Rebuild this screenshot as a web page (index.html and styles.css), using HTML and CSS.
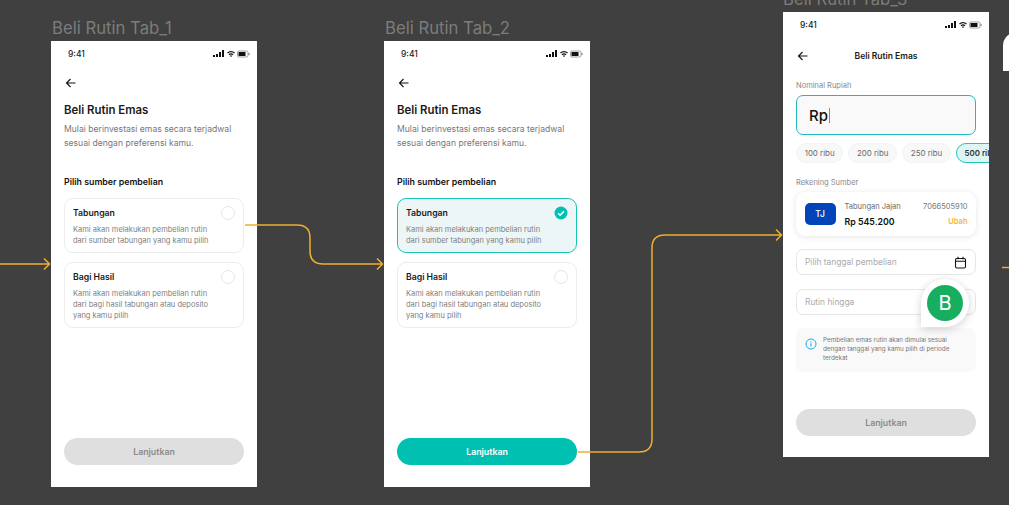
FILE: index.html
```html
<!DOCTYPE html>
<html lang="id">
<head>
<meta charset="utf-8">
<title>Beli Rutin</title>
<link rel="stylesheet" href="styles.css">
</head>
<body>
<main class="canvas">
  <svg class="wires" width="1009" height="505" viewBox="0 0 1009 505" fill="none" stroke="#eeae2f" stroke-width="1.5">
    <path d="M0 264H49M44 258.500L49.500 264L44 269.500"/>
    <path d="M245 225H297Q310 225 310 238V251Q310 264 323 264H382M377 258.500L382.500 264L377 269.500"/>
    <path d="M578 452H639Q652 452 652 439V248Q652 235 665 235H781M776 229.500L781.500 235L776 240.500"/>
    <path d="M1002 267.500H1009"/>
  </svg>

  <h2 class="board-name name-1">Beli Rutin Tab_1</h2>
  <section class="phone phone-1">
    <div class="status"><span>9:41</span>
      <svg class="status-icons" width="37" height="8" viewBox="0 0 37 8"><path d="M0 5h2v2H0zM3 4h2v3H3zM6 2h2v5H6zM9 0h2v7H9z" fill="#111"/><path d="M14.500 3a5 5 0 0 1 7 0M16 4.700a3 3 0 0 1 4 0" stroke="#111" fill="none" stroke-width="1.200"/><path d="M17 6l1-1 1 1-1 1z" fill="#111"/><rect x="24.500" y="1" width="10.500" height="6" rx="1.500" fill="none" stroke="#777" stroke-width=".7"/><rect x="25.500" y="2" width="7" height="4" fill="#111"/><path d="M36 3v2" stroke="#777"/></svg>
    </div>
    <svg class="back" width="12" height="12" viewBox="0 0 12 12" fill="none" stroke="#111" stroke-width="1.100"><path d="M10.500 6H1.500M5.500 2L1.500 6L5.500 10"/></svg>
    <h1 class="title">Beli Rutin Emas</h1>
    <p class="lead">Mulai berinvestasi emas secara terjadwal<br>sesuai dengan preferensi kamu.</p>
    <h3 class="section">Pilih sumber pembelian</h3>
    <div class="option">
      <div class="option-head"><strong>Tabungan</strong><i class="radio"></i></div>
      <p>Kami akan melakukan pembelian rutin<br>dari sumber tabungan yang kamu pilih</p>
    </div>
    <div class="option">
      <div class="option-head"><strong>Bagi Hasil</strong><i class="radio"></i></div>
      <p>Kami akan melakukan pembelian rutin<br>dari bagi hasil tabungan atau deposito<br>yang kamu pilih</p>
    </div>
    <button class="cta">Lanjutkan</button>
  </section>

  <h2 class="board-name name-2">Beli Rutin Tab_2</h2>
  <section class="phone phone-2">
    <div class="status"><span>9:41</span>
      <svg class="status-icons" width="37" height="8" viewBox="0 0 37 8"><path d="M0 5h2v2H0zM3 4h2v3H3zM6 2h2v5H6zM9 0h2v7H9z" fill="#111"/><path d="M14.500 3a5 5 0 0 1 7 0M16 4.700a3 3 0 0 1 4 0" stroke="#111" fill="none" stroke-width="1.200"/><path d="M17 6l1-1 1 1-1 1z" fill="#111"/><rect x="24.500" y="1" width="10.500" height="6" rx="1.500" fill="none" stroke="#777" stroke-width=".7"/><rect x="25.500" y="2" width="7" height="4" fill="#111"/><path d="M36 3v2" stroke="#777"/></svg>
    </div>
    <svg class="back" width="12" height="12" viewBox="0 0 12 12" fill="none" stroke="#111" stroke-width="1.100"><path d="M10.500 6H1.500M5.500 2L1.500 6L5.500 10"/></svg>
    <h1 class="title">Beli Rutin Emas</h1>
    <p class="lead">Mulai berinvestasi emas secara terjadwal<br>sesuai dengan preferensi kamu.</p>
    <h3 class="section">Pilih sumber pembelian</h3>
    <div class="option selected">
      <div class="option-head"><strong>Tabungan</strong>
        <svg class="check" width="14" height="14" viewBox="0 0 14 14"><circle cx="7" cy="7" r="6.500" fill="#00c0b2"/><path d="M4 7.200L6.100 9.200L10 5.200" fill="none" stroke="#fff" stroke-width="1.500"/></svg>
      </div>
      <p>Kami akan melakukan pembelian rutin<br>dari sumber tabungan yang kamu pilih</p>
    </div>
    <div class="option">
      <div class="option-head"><strong>Bagi Hasil</strong><i class="radio"></i></div>
      <p>Kami akan melakukan pembelian rutin<br>dari bagi hasil tabungan atau deposito<br>yang kamu pilih</p>
    </div>
    <button class="cta cta-on">Lanjutkan</button>
  </section>

  <h2 class="board-name name-3">Beli Rutin Tab_3</h2>
  <section class="phone phone-3">
    <div class="status"><span>9:41</span>
      <svg class="status-icons" width="37" height="8" viewBox="0 0 37 8"><path d="M0 5h2v2H0zM3 4h2v3H3zM6 2h2v5H6zM9 0h2v7H9z" fill="#111"/><path d="M14.500 3a5 5 0 0 1 7 0M16 4.700a3 3 0 0 1 4 0" stroke="#111" fill="none" stroke-width="1.200"/><path d="M17 6l1-1 1 1-1 1z" fill="#111"/><rect x="24.500" y="1" width="10.500" height="6" rx="1.500" fill="none" stroke="#777" stroke-width=".7"/><rect x="25.500" y="2" width="7" height="4" fill="#111"/><path d="M36 3v2" stroke="#777"/></svg>
    </div>
    <header class="bar">
      <svg class="back-3" width="12" height="12" viewBox="0 0 12 12" fill="none" stroke="#111" stroke-width="1.100"><path d="M10.500 6H1.500M5.500 2L1.500 6L5.500 10"/></svg>
      <span>Beli Rutin Emas</span>
    </header>
    <label class="small-label label-nominal">Nominal Rupiah</label>
    <div class="amount">Rp<i class="caret"></i></div>
    <div class="chips">
      <span class="chip">100 ribu</span>
      <span class="chip">200 ribu</span>
      <span class="chip">250 ribu</span>
      <span class="chip chip-on">500 ribu</span>
    </div>
    <label class="small-label label-source">Rekening Sumber</label>
    <div class="account">
      <div class="avatar">TJ</div>
      <div class="account-main"><span>Tabungan Jajan</span><strong>Rp 545.200</strong></div>
      <div class="account-side"><span>7066505910</span><b>Ubah</b></div>
    </div>
    <div class="field field-date">Pilih tanggal pembelian
      <svg width="13" height="13" viewBox="0 0 13 13" fill="none" stroke="#111" stroke-width="1.100"><rect x="1.500" y="2.500" width="10" height="9.500" rx="1.500"/><path d="M1.500 5.200h10M4 .8v2.500M9 .8v2.500"/></svg>
    </div>
    <div class="field field-until">Rutin hingga</div>
    <div class="info">
      <svg width="12" height="12" viewBox="0 0 12 12" fill="none" stroke="#12aef0"><circle cx="6" cy="6" r="5"/><path d="M6 5.300v3.200M6 3.300v1" stroke-width="1.100"/></svg>
      <p>Pembelian emas rutin akan dimulai sesuai<br>dengan tanggal yang kamu pilih di periode<br>terdekat</p>
    </div>
    <button class="cta cta-3">Lanjutkan</button>
  </section>

  <div class="pin"><span>B</span></div>
  <div class="edge-shape"></div>
</main>
</body>
</html>
```

FILE: styles.css
```css
* { box-sizing: border-box; }
html, body { margin: 0; height: 100%; }
body { background: #404040; overflow: hidden; font-family: "Inter", "Liberation Sans", sans-serif; color: #171717; }
.canvas { position: relative; width: 1009px; height: 505px; overflow: hidden; }
.wires { position: absolute; left: 0; top: 0; z-index: 1; }

.board-name { position: absolute; margin: 0; font: 400 16.700px/22px "Inter", sans-serif; color: #7c7c7c; white-space: nowrap; }
.name-1 { left: 52px; top: 17px; }
.name-2 { left: 385px; top: 17px; }
.name-3 { left: 783px; top: -12px; }

.phone { position: absolute; width: 206px; background: #fff; display: flex; flex-direction: column; padding: 0 13px; overflow: hidden; }
.phone-1 { left: 51px; top: 41px; height: 446px; }
.phone-2 { left: 384px; top: 41px; height: 446px; }
.phone-3 { left: 783px; top: 12px; height: 445px; }

.status { height: 25px; display: flex; align-items: center; justify-content: space-between; padding: 0 0 0 4px; margin-right: -6px; font-size: 8.500px; font-weight: 500; color: #222; }
.status-icons { display: block; }
.back { margin: 11px 0 0 1px; display: block; }
.title { margin: 13px 0 0; font-size: 11.400px; line-height: 16px; font-weight: 600; color: #1a1a1a; }
.lead { margin: 4px 0 0; font-size: 8.600px; line-height: 14px; color: #777; }
.section { margin: 26px 0 0; font-size: 8.800px; line-height: 12px; font-weight: 600; color: #111; }

.option { margin-top: 10px; border: 1px solid #ececec; border-radius: 9px; padding: 7px 8px 6px; color: #777; }
.option + .option { margin-top: 9px; }
.option-head { display: flex; justify-content: space-between; align-items: center; height: 14px; }
.option-head strong { font-size: 8.700px; font-weight: 600; color: #1a1a1a; }
.option p { margin: 4px 0 0; font-size: 7.500px; line-height: 11px; color: #808080; white-space: nowrap; }
.radio { width: 14px; height: 14px; border: 1px solid #e6e6e6; border-radius: 50%; }
.check { display: block; }
.selected { background: #edf6f7; border-color: #17c5b8; }

.cta { margin-top: auto; margin-bottom: 22px; width: 100%; height: 27px; border: 0; border-radius: 14px; background: #dfdfdf; color: #8b8b8b; font: 600 8.800px "Inter", sans-serif; }
.cta-on { background: #00c0b2; color: #fff; }
.cta-3 { margin-bottom: 21px; }

.bar { position: relative; height: 14px; margin-top: 12px; display: flex; align-items: center; justify-content: center; font-size: 8.500px; font-weight: 600; color: #1a1a1a; }
.back-3 { position: absolute; left: 1px; top: 1px; }
.small-label { display: block; font-size: 7.500px; line-height: 10px; color: #8a8a8a; }
.label-nominal { margin-top: 18px; }
.amount { margin-top: 4px; height: 40px; border: 1px solid #1fb9bf; border-radius: 7px; background: #f9f9f9; display: flex; align-items: center; padding-left: 12px; font-size: 15px; font-weight: 500; color: #111; }
.caret { width: 1px; height: 15px; background: #888; margin-left: 1px; }
.chips { display: flex; gap: 5px; margin-top: 8px; margin-right: -13px; white-space: nowrap; overflow: hidden; }
.chip { flex: none; height: 20px; padding: 0 7.700px; border: 1px solid #eff5f4; border-radius: 10px; background: #f8f8f8; font-size: 7.900px; line-height: 18px; color: #6a6a6a; }
.chip-on { background: #dff5f4; border-color: #27c4b8; color: #333; font-weight: 600; }
.label-source { margin-top: 15px; }
.account { margin-top: 4px; height: 44px; border-radius: 9px; background: #fff; box-shadow: 0 1px 6px rgba(0,0,0,.1); display: flex; align-items: center; padding: 0 8.500px; }
.avatar { width: 31px; height: 22px; border-radius: 5px; background: #0344b8; color: #fff; font-size: 8.500px; font-weight: 500; display: flex; align-items: center; justify-content: center; }
.account-main { display: flex; flex-direction: column; gap: 4px; margin-left: 9px; flex: 1; }
.account-main span { font-size: 7.500px; line-height: 10px; color: #6a6a6a; }
.account-main strong { font-size: 8.800px; line-height: 11px; font-weight: 600; color: #111; }
.account-side { display: flex; flex-direction: column; gap: 4px; align-items: flex-end; }
.account-side span { font-size: 7.500px; line-height: 10px; color: #777; }
.account-side b { font-size: 7.500px; line-height: 11px; font-weight: 600; color: #f3b53a; }
.field { display: flex; align-items: center; justify-content: space-between; height: 26px; border: 1px solid #e6e6e6; border-radius: 7px; padding: 0 8px; font-size: 8.400px; color: #aaa; }
.field-date { margin-top: 13px; }
.field-date svg { display: block; }
.field-until { margin-top: 14px; }
.info { margin-top: 13px; height: 44px; border-radius: 8px; background: #f9f9f9; display: flex; gap: 6px; padding: 8px 8px 0 9px; }
.info svg { flex: none; margin-top: 2px; }
.info p { margin: 0; font-size: 6.300px; line-height: 8.800px; color: #777; white-space: nowrap; }

.pin { position: absolute; z-index: 2; left: 921px; top: 279px; width: 48px; height: 48px; padding: 6px; background: #fff; border-radius: 50% 50% 50% 0; box-shadow: 0 2px 8px rgba(0,0,0,.18); }
.pin span { display: flex; width: 36px; height: 36px; border-radius: 50%; background: #18ae5f; color: #fff; align-items: center; justify-content: center; font-size: 20px; }
.edge-shape { position: absolute; left: 1003px; top: 32px; width: 30px; height: 39px; background: #fff; border-radius: 14px 0 0 0; }
```
